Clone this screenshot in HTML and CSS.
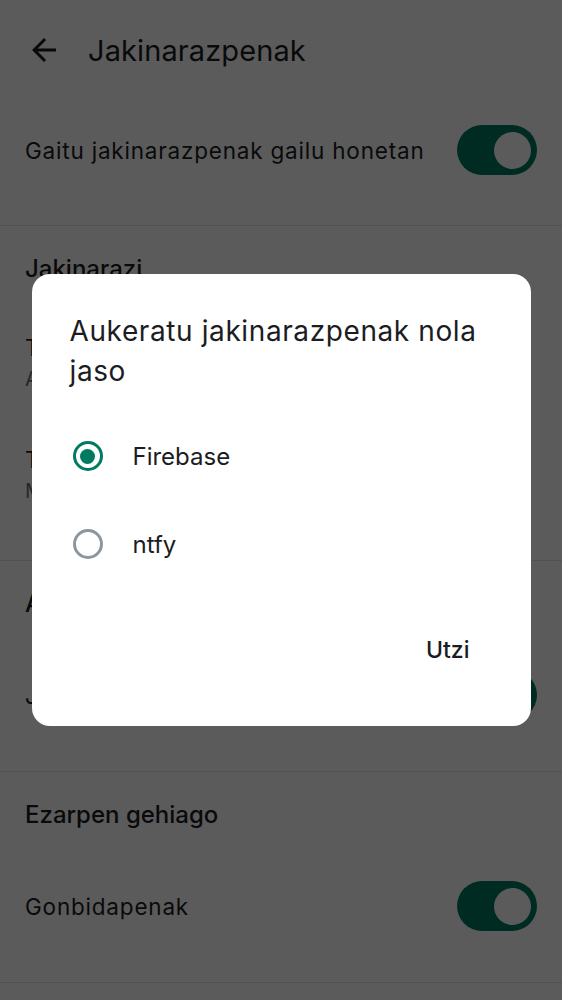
FILE: index.html
```html
<!DOCTYPE html>
<html lang="eu">
<head>
<meta charset="utf-8">
<title>Jakinarazpenak</title>
<link rel="stylesheet" href="styles.css">
</head>
<body>
<div class="app">
  <header class="topbar">
    <svg class="back" viewBox="0 0 24 24" width="36" height="36"><path d="M20 11H7.83l5.59-5.59L12 4l-8 8 8 8 1.41-1.41L7.83 13H20v-2z"/></svg>
    <h1 class="topbar-title">Jakinarazpenak</h1>
  </header>

  <section class="section first">
    <div class="row">
      <span class="row-text">Gaitu jakinarazpenak gailu honetan</span>
      <span class="switch"><span class="thumb"></span></span>
    </div>
  </section>

  <section class="section">
    <h2 class="section-title">Jakinarazi</h2>
    <div class="row two-line">
      <span class="row-text">Txat pribatuak</span>
      <span class="row-sub">Aipamenak eta gako-hitzak</span>
    </div>
    <div class="row two-line">
      <span class="row-text">Taldeko txatak</span>
      <span class="row-sub">Mezu guztiak</span>
    </div>
  </section>

  <section class="section">
    <h2 class="section-title">Aipamenak</h2>
    <div class="row">
      <span class="row-text">Jakinarazi @room aipatzean</span>
      <span class="switch"><span class="thumb"></span></span>
    </div>
  </section>

  <section class="section">
    <h2 class="section-title">Ezarpen gehiago</h2>
    <div class="row">
      <span class="row-text">Gonbidapenak</span>
      <span class="switch"><span class="thumb"></span></span>
    </div>
  </section>
</div>

<div class="scrim"></div>

<div class="dialog-wrap">
  <div class="dialog" role="dialog">
    <h2 class="dialog-title">Aukeratu jakinarazpenak nola jaso</h2>
    <ul class="options">
      <li class="option">
        <span class="radio checked"><span class="dot"></span></span>
        <span class="option-label">Firebase</span>
      </li>
      <li class="option">
        <span class="radio"></span>
        <span class="option-label">ntfy</span>
      </li>
    </ul>
    <div class="actions">
      <button class="text-btn">Utzi</button>
    </div>
  </div>
</div>
</body>
</html>
```

FILE: styles.css
```css
* { box-sizing: border-box; }

html, body {
  margin: 0;
  padding: 0;
  height: 100%;
  overflow: hidden;
}

body {
  background: #ffffff;
  font-family: Inter, Roboto, "Noto Sans", "Liberation Sans", sans-serif;
  color: #1b1d22;
}

.app {
  display: flex;
  flex-direction: column;
}

.topbar {
  height: 100px;
  display: flex;
  align-items: center;
  padding-left: 26px;
  gap: 26px;
}

.back {
  fill: #1b1d22;
  flex: none;
}

.topbar-title {
  margin: 0;
  font-size: 29px;
  font-weight: 400;
  letter-spacing: 0.1px;
  color: #1b1d22;
}

.section {
  padding-bottom: 26px;
  border-bottom: 1px solid #e4e4e6;
}

.section.first {
  padding-bottom: 25px;
}

.section-title {
  margin: 0;
  height: 84px;
  display: flex;
  align-items: center;
  padding: 0 25px;
  font-size: 24px;
  font-weight: 500;
  color: #1b1d22;
}

.row {
  height: 100px;
  display: flex;
  align-items: center;
  justify-content: space-between;
  padding: 0 25px 0 25px;
}

.row-text {
  font-size: 22.5px;
  letter-spacing: 0.8px;
  color: #1b1d22;
}

.row.two-line {
  height: 112px;
  flex-direction: column;
  align-items: flex-start;
  justify-content: flex-start;
  padding-top: 24px;
  gap: 6px;
}

.row-sub {
  font-size: 20px;
  letter-spacing: 0.4px;
  color: #656d77;
}

.switch {
  flex: none;
  width: 80px;
  height: 50px;
  border-radius: 25px;
  background: #007a61;
  display: flex;
  align-items: center;
  justify-content: flex-end;
  padding-right: 6px;
}

.thumb {
  width: 37px;
  height: 37px;
  border-radius: 50%;
  background: #ffffff;
}

.scrim {
  position: fixed;
  inset: 0;
  background: rgba(0, 0, 0, 0.643);
}

.dialog-wrap {
  position: fixed;
  inset: 0;
  display: flex;
  align-items: center;
  justify-content: center;
}

.dialog {
  width: 499px;
  height: 452px;
  background: #ffffff;
  border-radius: 18px;
  padding: 37px 0 0 0;
  display: flex;
  flex-direction: column;
}

.dialog-title {
  margin: 0;
  padding: 0 20px 0 38px;
  font-size: 28px;
  line-height: 40px;
  font-weight: 400;
  letter-spacing: 0.6px;
  color: #1b1d22;
}

.options {
  list-style: none;
  margin: 21px 0 0 0;
  padding: 0;
}

.option {
  height: 88px;
  display: flex;
  align-items: center;
  padding-left: 41px;
  gap: 30px;
}

.radio {
  flex: none;
  width: 30px;
  height: 30px;
  border-radius: 50%;
  border: 3px solid #8d959f;
  display: flex;
  align-items: center;
  justify-content: center;
}

.radio.checked {
  border-color: #007a61;
}

.dot {
  width: 15px;
  height: 15px;
  border-radius: 50%;
  background: #007a61;
}

.option-label {
  font-size: 24px;
  color: #1b1d22;
}

.actions {
  display: flex;
  justify-content: flex-end;
  padding: 34px 45px 0 0;
}

.text-btn {
  height: 56px;
  padding: 0 16px;
  border: 0;
  background: transparent;
  font-family: Inter, Roboto, "Noto Sans", "Liberation Sans", sans-serif;
  font-size: 23px;
  font-weight: 500;
  color: #1b1d22;
}
```
